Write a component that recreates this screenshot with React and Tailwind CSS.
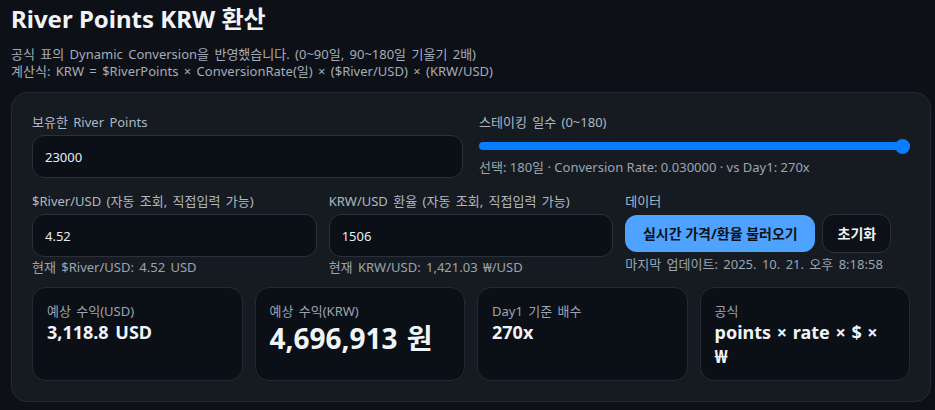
import { useState } from "react";

const font = { fontFamily: '"Noto Sans", "Noto Sans CJK KR", sans-serif' };

function Field({ label, value, onChange, help }) {
  return (
    <div className="flex flex-col">
      <label className="text-[13px] leading-[18px] text-[#aeb8c4] mb-[4px]">{label}</label>
      <input
        value={value}
        onChange={(e) => onChange(e.target.value)}
        className="h-[43px] w-full rounded-[12px] border border-[#2a313c] bg-[#0b0f16] px-[12px] text-[13px] text-[#e6edf3] outline-none"
      />
      {help && <p className="text-[13px] leading-[18px] text-[#9ba5b1] mt-[1px]">{help}</p>}
    </div>
  );
}

function Stat({ label, children }) {
  return (
    <div className="h-[94px] rounded-[14px] border border-[#232a35] bg-[#0b0f16] px-[14px] pt-[14px]">
      <p className="text-[13px] leading-[18px] text-[#9ba5b1]">{label}</p>
      {children}
    </div>
  );
}

export default function App() {
  const [points, setPoints] = useState("23000");
  const [river, setRiver] = useState("4.52");
  const [krw, setKrw] = useState("1506");

  return (
    <div
      className="min-h-screen bg-[#0d1117] text-[#e6edf3] pl-[11px] pt-[3px] overflow-hidden [word-spacing:2px]"
      style={font}
    >
      <h1 className="text-[24px] leading-[32px] font-bold text-[#f0f4f8] [word-spacing:0px]">River Points KRW 환산</h1>
      <p className="mt-[11px] text-[13px] leading-[17px] text-[#a3adb9]">
        공식 표의 Dynamic Conversion을 반영했습니다. (0~90일, 90~180일 기울기 2배)
        <br />
        계산식: KRW = $RiverPoints × ConversionRate(일) × ($River/USD) × (KRW/USD)
      </p>

      <div className="mt-[12px] w-[920px] rounded-[16px] border border-[#222a35] bg-[#161b22] p-[20px]">
        <div className="grid grid-cols-2 gap-[16px]">
          <Field label="보유한 River Points" value={points} onChange={setPoints} />
          <div className="flex flex-col">
            <label className="text-[13px] leading-[18px] text-[#aeb8c4]">스테이킹 일수 (0~180)</label>
            <div className="relative mt-[8px] h-[14px] flex items-center">
              <div className="h-[8px] w-full rounded-full bg-[#0a7cff]" />
              <div className="absolute right-0 top-[-0.5px] h-[15px] w-[15px] rounded-full bg-[#0a7cff]" />
            </div>
            <p className="mt-[5px] text-[13px] leading-[18px] text-[#9ba5b1] [word-spacing:0px]">
              선택: 180일 · Conversion Rate: 0.030000 · vs Day1: 270x
            </p>
          </div>
        </div>

        <div className="mt-[14px] grid grid-cols-3 gap-[12px]">
          <Field
            label="$River/USD (자동 조회, 직접입력 가능)"
            value={river}
            onChange={setRiver}
            help="현재 $River/USD: 4.52 USD"
          />
          <Field
            label="KRW/USD 환율 (자동 조회, 직접입력 가능)"
            value={krw}
            onChange={setKrw}
            help="현재 KRW/USD: 1,421.03 ₩/USD"
          />
          <div className="flex flex-col">
            <label className="text-[13px] leading-[18px] text-[#aeb8c4] mb-[4px]">데이터</label>
            <div className="flex items-center gap-[7px]">
              <button className="h-[37px] w-[190px] rounded-[12px] bg-[#4da3ff] text-[14px] font-bold text-[#0d1117]">
                실시간 가격/환율 불러오기
              </button>
              <button className="h-[39px] w-[69px] rounded-[12px] border border-[#2a313c] bg-[#0d1117] text-[14px] font-bold text-[#f0f4f8]">
                초기화
              </button>
            </div>
            <p className="mt-[2px] text-[13px] leading-[18px] text-[#9ba5b1]">
              마지막 업데이트: 2025. 10. 21. 오후 8:18:58
            </p>
          </div>
        </div>

        <div className="mt-[11px] grid grid-cols-4 gap-[12px]">
          <Stat label="예상 수익(USD)">
            <p className="text-[18px] leading-[24px] font-bold text-[#f0f4f8]">3,118.8 USD</p>
          </Stat>
          <Stat label="예상 수익(KRW)">
            <p className="text-[28px] leading-[36px] font-bold text-[#f0f4f8]">4,696,913 원</p>
          </Stat>
          <Stat label="Day1 기준 배수">
            <p className="text-[18px] leading-[24px] font-bold text-[#f0f4f8]">270x</p>
          </Stat>
          <Stat label="공식">
            <p className="text-[18px] leading-[24px] font-bold text-[#f0f4f8] pr-[10px] [word-spacing:1px]">
              points × rate × $ × ₩
            </p>
          </Stat>
        </div>
      </div>
    </div>
  );
}
